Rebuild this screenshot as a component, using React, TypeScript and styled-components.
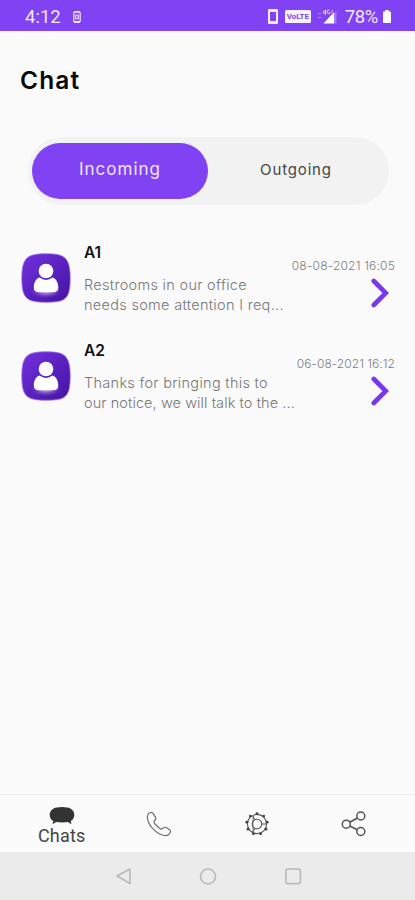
import React from "react";
import styled, { createGlobalStyle } from "styled-components";

const Global = createGlobalStyle`
  *, *::before, *::after { box-sizing: border-box; }
  body { margin: 0; background: #fafafa; font-family: Inter, "Noto Sans", sans-serif; }
  svg { display: block; flex: none; }
  button { border: 0; padding: 0; background: none; font: inherit; color: inherit; }
`;

const Screen = styled.div`
  width: 415px;
  height: 900px;
  display: flex;
  flex-direction: column;
  background: #fafafa;
  overflow: hidden;
`;

const StatusBar = styled.header`
  height: 31px;
  flex: none;
  padding: 2px 24px 0 25px;
  display: flex;
  align-items: center;
  justify-content: space-between;
  background: #8142f4;
  color: #f3eaff;
  font-family: Roboto, sans-serif;
  font-size: 18.5px;
`;

const StatusGroup = styled.div<{ $gap: number }>`
  display: flex;
  align-items: center;
  gap: ${(p) => p.$gap}px;
`;

const StatusText = styled.span<{ $spacing: number }>`
  letter-spacing: ${(p) => p.$spacing}px;
  line-height: 22px;
`;

const VolteBadge = styled.span`
  width: 26px;
  height: 13px;
  border-radius: 1.5px;
  background: #f8f3ff;
  color: #8142f4;
  font: 700 8px/13px Roboto, sans-serif;
  letter-spacing: -0.1px;
  text-align: center;
`;

const Main = styled.main`
  flex: 1;
  display: flex;
  flex-direction: column;
`;

const Title = styled.h1`
  margin: 32px 0 0 20px;
  color: #080808;
  font-size: 24.5px;
  font-weight: 600;
  line-height: 34px;
  letter-spacing: 1.1px;
`;

const Segments = styled.div`
  width: 361px;
  height: 68px;
  margin: 40px 0 0 28px;
  padding: 6px 4px;
  display: flex;
  border-radius: 34px;
  background: #f2f2f2;
`;

const Segment = styled.button<{ $active?: boolean }>`
  width: 176px;
  height: 56px;
  padding-bottom: ${(p) => (p.$active ? 4 : 3)}px;
  border-radius: 28px;
  background: ${(p) => (p.$active ? "#8142f4" : "transparent")};
  color: ${(p) => (p.$active ? "#f1e6ff" : "#454545")};
  font-size: ${(p) => (p.$active ? 17 : 15)}px;
  letter-spacing: ${(p) => (p.$active ? 1 : 0.85)}px;
`;

const ChatList = styled.ul`
  list-style: none;
  margin: 36px 0 0;
  padding: 0;
`;

const ChatRow = styled.li`
  height: 98px;
  padding: 0 20px 0 21px;
  display: grid;
  grid-template-columns: 63px 1fr auto;
`;

const AvatarSlot = styled.div`
  padding-top: 12px;
`;

const Name = styled.h2`
  margin: 1px 0 0;
  color: #111;
  font-size: 15.5px;
  font-weight: 600;
  line-height: 22px;
`;

const Message = styled.p`
  margin: 11px 0 0;
  width: 0;
  color: #777;
  font-size: 14.5px;
  font-weight: 300;
  line-height: 20px;
  white-space: nowrap;
`;

const MessageLine = styled.span<{ $spacing: number }>`
  display: block;
  letter-spacing: ${(p) => p.$spacing}px;
`;

const Meta = styled.div`
  padding-top: 17px;
  display: flex;
  flex-direction: column;
  align-items: flex-end;
  gap: 4px;
`;

const Stamp = styled.time<{ $spacing: number }>`
  color: #7c7c7c;
  font-size: 12px;
  font-weight: 300;
  line-height: 16px;
  white-space: nowrap;
  letter-spacing: ${(p) => p.$spacing}px;
`;

const ChevronSlot = styled.div`
  margin-right: 6px;
`;

const TabBar = styled.nav`
  height: 58px;
  flex: none;
  padding: 0 12px 0 13px;
  display: grid;
  grid-template-columns: repeat(4, 1fr);
  border-top: 1px solid #ececec;
  background: #fbfbfb;
`;

const Tab = styled.button`
  display: flex;
  flex-direction: column;
  align-items: center;
  justify-content: center;
  color: #444;
`;

const ActiveTab = styled(Tab)`
  padding-top: 5px;
  gap: 1px;
`;

const TabLabel = styled.span`
  font: 400 18px/20px Roboto, sans-serif;
  letter-spacing: 0.2px;
`;

const SystemBar = styled.footer`
  height: 48px;
  flex: none;
  display: flex;
  align-items: center;
  justify-content: center;
  gap: 65px;
  background: #ebebeb;
`;

const Avatar = ({ id }: { id: string }) => (
  <svg width="50" height="50" viewBox="0 0 50 50">
    <defs>
      <linearGradient id={`${id}-tile`} x1="0" y1="0" x2="1" y2="1">
        <stop offset="0" stopColor="#7432dc" />
        <stop offset="0.55" stopColor="#5820bd" />
        <stop offset="1" stopColor="#45159f" />
      </linearGradient>
      <radialGradient id={`${id}-glow`}>
        <stop offset="0" stopColor="#fff" stopOpacity="0.8" />
        <stop offset="1" stopColor="#a77bf0" stopOpacity="0" />
      </radialGradient>
    </defs>
    <path d="M25 .8C42 .8 49.2 3 49.2 25S44 49.2 25 49.2.8 46 .8 25 7 .8 25 .8Z" fill={`url(#${id}-tile)`} stroke="#9d6ee9" strokeWidth=".8" />
    <ellipse cx="25" cy="38" rx="15" ry="7" fill={`url(#${id}-glow)`} />
    <circle cx="25" cy="18" r="7.3" fill="#fff" />
    <path d="M18.5 24.6Q25 29.5 31.5 24.6C35 25.4 37.3 30 37.3 34.5Q37.3 39.3 32 39.3H18Q12.8 39.3 12.8 34.5C12.8 30 15 25.4 18.5 24.6Z" fill="#fff" />
  </svg>
);

const Chevron = () => (
  <svg width="18" height="30" viewBox="0 0 18 30" fill="none" stroke="#7936ed" strokeWidth="4.6" strokeLinecap="round">
    <path d="m2.8 3 12 12-12 12" />
  </svg>
);

const NotificationIcon = () => (
  <svg width="8" height="12" viewBox="0 0 8 12" fill="none" stroke="#efe5ff">
    <path d="M1 .9h6M1 11h6" strokeWidth="1.8" />
    <path d="M.8 1v10M7.2 1v10" strokeWidth="1.2" />
    <path d="M2.6 4h2.8v3.8H2.6zM3.8 6h1" strokeWidth="1" />
  </svg>
);

const PhoneDevice = () => (
  <svg width="10" height="15" viewBox="0 0 10 15">
    <path fill="#f4ecff" fillRule="evenodd" d="M1.3 0h7.4Q10 0 10 1.3v12.4Q10 15 8.7 15H1.3Q0 15 0 13.7V1.3Q0 0 1.3 0ZM2 3v9h6V3Z" />
  </svg>
);

const Signal = () => (
  <svg width="20" height="15" viewBox="0 0 20 15">
    <path d="M0 4.5h3M0 8.5h3" stroke="#bd98f9" strokeWidth="1.1" />
    <path d="M18.5 2v12.5h-4V6Z" fill="#a77bf7" />
    <path d="M5.5 14.5 16 3v11.5Z" fill="#fff" />
    <path d="m7 1-2 3h3M7.5 1v5M11.5 1q-3-.5-2.5 2T11.5 4.5V3M12.5 4q2-1 2-3" fill="none" stroke="#e2d1ff" strokeWidth="1" />
  </svg>
);

const Battery = () => (
  <svg width="8" height="13" viewBox="0 0 9 13" fill="#fff" preserveAspectRatio="none">
    <path d="M2.5 0h4v1.5H8Q9 1.5 9 2.5V12q0 1-1 1H1q-1 0-1-1V2.5q0-1 1-1h1.5Z" />
  </svg>
);

const ChatsIcon = () => (
  <svg width="26" height="18" viewBox="0 0 26 18" fill="#333">
    <path d="M8 .5Q13-.4 18 .5C23 1 25.3 4.5 25.3 8c0 3-1.7 5.2-3.6 6.1l.8 3.2-3.7-2.2Q13 16 7.2 15.1l-3.7 2.2.8-3.2C2.4 13.2.7 11 .7 8 .7 4.5 3 1 8 .5Z" />
  </svg>
);

const CallIcon = () => (
  <svg width="28" height="28" viewBox="0 0 28 28" fill="none" stroke="#707070" strokeWidth="1.2" strokeLinejoin="round">
    <path d="M3.4 3.8Q5.6 1.7 7.6 2.9L10.7 7.6Q11.2 9.4 9.3 10.7 8.5 12 9.7 13.8L14.5 18.2Q16.5 19.8 18 18.2 19.5 16.8 21.4 17.5L25.2 20.2Q26.3 21.8 24.5 23.9 22.6 25.9 19.3 25.5C11.7 24 3.8 16.2 2.5 8.8Q2.1 5.4 3.4 3.8Z" />
  </svg>
);

const teeth = Array.from({ length: 9 }, (_, i) => {
  const a = (i * 40 - 90) * (Math.PI / 180);
  return { x: 13 + Math.cos(a) * 10.4, y: 13 + Math.sin(a) * 10.4 };
});

const SettingsIcon = () => (
  <svg width="26" height="26" viewBox="0 0 26 26" fill="none" stroke="#555" strokeWidth="1.1">
    <circle cx="13" cy="13" r="9.6" />
    <circle cx="13" cy="13" r="4.8" />
    <path d="M10.6 8.8 8.8 4.6M10.6 17.2 8.8 21.4M17.8 13h4.8" />
    <path d="M9 5v16" strokeWidth=".7" />
    {teeth.map((t, i) => (
      <circle key={i} cx={t.x} cy={t.y} r="1.4" fill="#444" stroke="none" />
    ))}
  </svg>
);

const ShareIcon = () => (
  <svg width="26" height="26" viewBox="0 0 26 26" fill="none" stroke="#555" strokeWidth="1.5">
    <circle cx="5.3" cy="13.2" r="4" />
    <circle cx="19.8" cy="5" r="4" />
    <circle cx="19.8" cy="20.5" r="4" />
    <path d="m8.8 11.2 7.5-4.2M8.8 15.1l7.5 3.7" strokeWidth="1.7" />
  </svg>
);

const chats = [
  {
    id: "a1",
    name: "A1",
    lines: [
      { text: "Restrooms in our office", spacing: 0.3 },
      { text: "needs some attention I req...", spacing: 0.3 },
    ],
    stamp: "08-08-2021 16:05",
    stampSpacing: 0.2,
  },
  {
    id: "a2",
    name: "A2",
    lines: [
      { text: "Thanks for bringing this to", spacing: 0.29 },
      { text: "our notice, we will talk to the ...", spacing: 0.08 },
    ],
    stamp: "06-08-2021 16:12",
    stampSpacing: 0.05,
  },
];

export default function App() {
  return (
    <Screen>
      <Global />
      <StatusBar>
        <StatusGroup $gap={12}>
          <StatusText $spacing={0}>4:12</StatusText>
          <NotificationIcon />
        </StatusGroup>
        <StatusGroup $gap={7}>
          <PhoneDevice />
          <VolteBadge>VoLTE</VolteBadge>
          <Signal />
          <StatusGroup $gap={5}>
            <StatusText $spacing={-0.4}>78%</StatusText>
            <Battery />
          </StatusGroup>
        </StatusGroup>
      </StatusBar>
      <Main>
        <Title>Chat</Title>
        <Segments>
          <Segment $active>Incoming</Segment>
          <Segment>Outgoing</Segment>
        </Segments>
        <ChatList>
          {chats.map((c) => (
            <ChatRow key={c.id}>
              <AvatarSlot>
                <Avatar id={c.id} />
              </AvatarSlot>
              <div>
                <Name>{c.name}</Name>
                <Message>
                  {c.lines.map((line) => (
                    <MessageLine key={line.text} $spacing={line.spacing}>
                      {line.text}
                    </MessageLine>
                  ))}
                </Message>
              </div>
              <Meta>
                <Stamp $spacing={c.stampSpacing}>{c.stamp}</Stamp>
                <ChevronSlot>
                  <Chevron />
                </ChevronSlot>
              </Meta>
            </ChatRow>
          ))}
        </ChatList>
      </Main>
      <TabBar>
        <ActiveTab>
          <ChatsIcon />
          <TabLabel>Chats</TabLabel>
        </ActiveTab>
        <Tab aria-label="Calls">
          <CallIcon />
        </Tab>
        <Tab aria-label="Settings">
          <SettingsIcon />
        </Tab>
        <Tab aria-label="Share">
          <ShareIcon />
        </Tab>
      </TabBar>
      <SystemBar>
        <svg width="20" height="20" viewBox="0 0 20 20" fill="none" stroke="#b9b9b9" strokeWidth="1.6" strokeLinejoin="round">
          <path d="M17 3v14.5L4 10Z" />
        </svg>
        <svg width="20" height="20" viewBox="0 0 20 20" fill="none" stroke="#b9b9b9" strokeWidth="1.6">
          <circle cx="10" cy="10.5" r="7.5" />
        </svg>
        <svg width="20" height="20" viewBox="0 0 20 20" fill="none" stroke="#b9b9b9" strokeWidth="1.6">
          <rect x="2.8" y="3" width="14.6" height="14.6" rx="2" />
        </svg>
      </SystemBar>
    </Screen>
  );
}
